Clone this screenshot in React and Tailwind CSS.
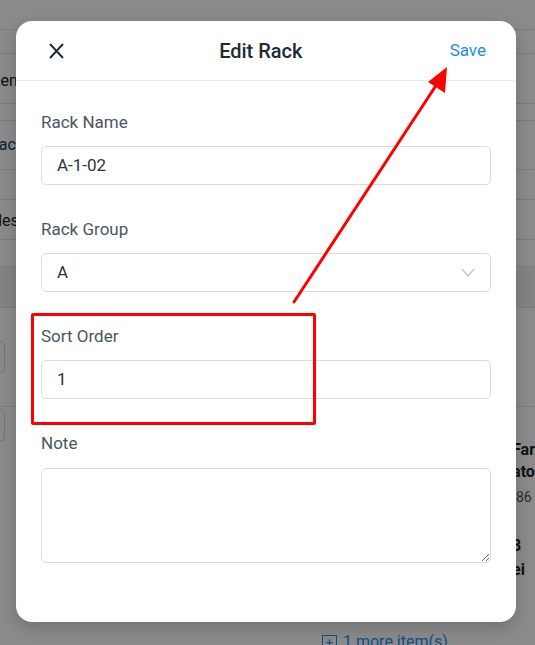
import { useState } from 'react';

const font = { fontFamily: 'Roboto, "Liberation Sans", sans-serif' };

function BackgroundPage() {
  return (
    <div className="w-full h-full bg-white text-[16px] text-[#222]">
      <div className="h-[30px] border-b border-[#e6e6e6]" />
      <div className="h-[24px] border-b border-[#e6e6e6]" />
      <div className="h-[50px] border-b border-[#e6e6e6] flex items-center">
        <span className="-ml-[9px] pt-[4px]">Item</span>
      </div>
      <div className="h-[17px] border-b border-[#e6e6e6]" />
      <div className="h-[49px] border-b border-[#e6e6e6] flex items-center">
        <span className="-ml-[11px] text-[#1c3a5c]">Rack</span>
      </div>
      <div className="h-[30px] border-b border-[#e6e6e6]" />
      <div className="h-[40px] border-b border-[#e6e6e6] flex items-center">
        <span className="-ml-[20px] pt-[2px]">Sales</span>
      </div>
      <div className="h-[27px] border-b border-[#e6e6e6]" />
      <div className="h-[41px] bg-[#f3f3f3] border-b border-[#e6e6e6]" />
      <div className="h-[99px] border-b border-[#e6e6e6] flex items-center">
        <div className="-ml-[40px] w-[45px] h-[32px] border border-[#d8d8d8] rounded" />
      </div>
      <div className="flex">
        <div className="w-[513px] pt-[2px]">
          <div className="-ml-[40px] w-[45px] h-[32px] border border-[#d8d8d8] rounded" />
          <div className="h-[189px]" />
          <div className="flex items-center gap-[6px] pl-[322px] text-[#1890ff] whitespace-nowrap">
            <span className="inline-flex items-center justify-center w-[15px] h-[15px] border border-[#1890ff] text-[13px] leading-none">+</span>
            <span>1 more item(s)</span>
          </div>
        </div>
        <div className="flex flex-col pt-[32px] whitespace-nowrap">
          <span className="font-bold leading-[22px]">Far</span>
          <span className="font-bold leading-[22px]">ato</span>
          <span className="text-[#555] text-[14px] leading-[28px]">-86</span>
          <span className="font-bold leading-[24px] mt-[23px]">8</span>
          <span className="font-bold leading-[24px]">ei</span>
        </div>
      </div>
    </div>
  );
}

function Field({ label, children }) {
  return (
    <div className="mb-[32px]">
      <div className="h-6 leading-6 text-[17px] text-[#4a5661] mb-3">{label}</div>
      {children}
    </div>
  );
}

function TextBox({ value }) {
  return (
    <div className="h-[39px] border border-[#dcdcdc] rounded-[5px] flex items-center pl-[15px] text-[17px] text-[#2b3640]">
      {value}
    </div>
  );
}

export default function App() {
  const [note, setNote] = useState('');
  return (
    <div className="relative w-[535px] h-[645px] overflow-hidden" style={font}>
      <BackgroundPage />
      <div className="absolute inset-0 bg-black/[0.46]" />

      <div className="absolute left-[16px] top-[21px] w-[500px] h-[601px] bg-white rounded-[16px] shadow-[0_6px_16px_rgba(0,0,0,0.18)] flex flex-col">
        <div className="h-[60px] border-b border-[#ececec] flex items-center justify-between pl-[33px] pr-[30px]">
          <svg width="15" height="16" viewBox="0 0 15 16" className="text-[#1d2b36]">
            <path d="M1 1 L14 15 M14 1 L1 15" stroke="currentColor" strokeWidth="1.9" fill="none" />
          </svg>
          <div className="text-[20px] font-medium text-[#1d2b36] ml-[8px]">Edit Rack</div>
          <button className="text-[17px] text-[#1a8ce8]">Save</button>
        </div>

        <div className="pt-[29px] px-[25px]">
          <Field label="Rack Name">
            <TextBox value="A-1-02" />
          </Field>
          <Field label="Rack Group">
            <div className="h-[39px] border border-[#dcdcdc] rounded-[5px] flex items-center justify-between pl-[15px] pr-[15px] text-[17px] text-[#2b3640]">
              <span>A</span>
              <svg width="14" height="9" viewBox="0 0 14 9">
                <path d="M1 1 L7 8 L13 1" stroke="#c4c4c4" strokeWidth="1.2" fill="none" />
              </svg>
            </div>
          </Field>
          <Field label="Sort Order">
            <TextBox value="1" />
          </Field>
          <div>
            <div className="h-6 leading-6 text-[17px] text-[#4a5661] mb-[13px]">Note</div>
            <textarea
              value={note}
              onChange={(e) => setNote(e.target.value)}
              className="block w-full h-[95px] border border-[#dcdcdc] rounded-[5px] outline-none resize"
            />
          </div>
        </div>
      </div>

      {/* annotation */}
      <div className="absolute left-[31px] top-[313px] w-[285px] h-[112px] border-[3px] border-[#ff0000] rounded-[2px]" />
      <svg className="absolute inset-0 pointer-events-none" width="535" height="645">
        <line x1="294" y1="302" x2="437" y2="84" stroke="#ff0000" strokeWidth="3" strokeLinecap="round" />
        <polygon points="447,67 445,93 428,82" fill="#ff0000" />
      </svg>
    </div>
  );
}
